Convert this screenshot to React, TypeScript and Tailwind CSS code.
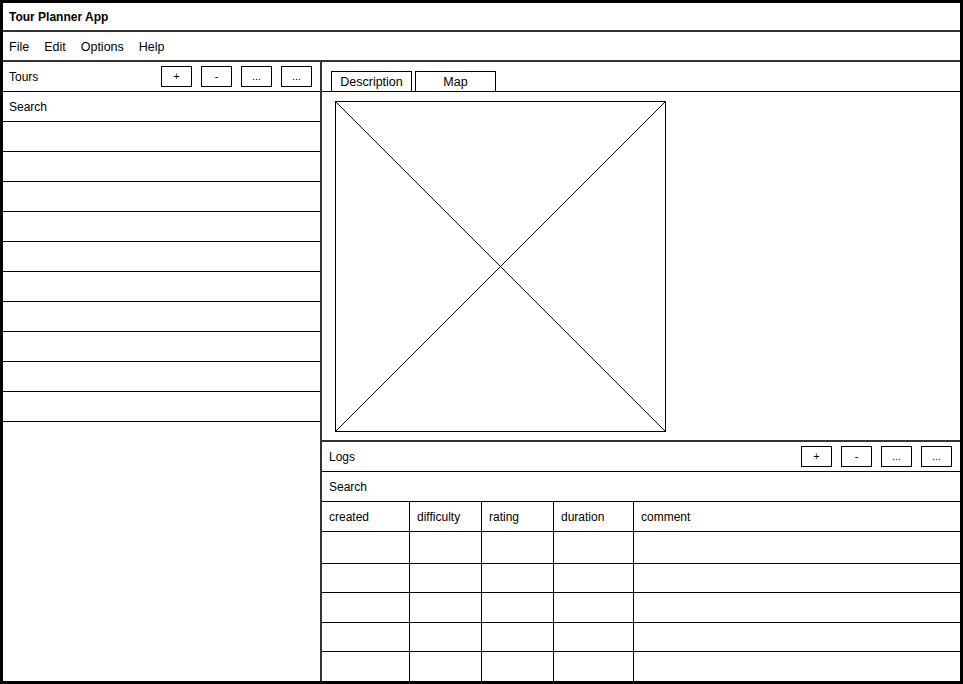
import React from "react";

const font = { fontFamily: '"Liberation Sans", Arial, sans-serif' };

const ToolButton: React.FC<{ label: string }> = ({ label }) => (
  <div className="flex items-center justify-center w-[31px] h-[21px] border border-black text-[11px] leading-none">
    {label}
  </div>
);

const Toolbar: React.FC = () => (
  <div className="flex gap-[9px]">
    <ToolButton label="+" />
    <ToolButton label="-" />
    <ToolButton label="..." />
    <ToolButton label="..." />
  </div>
);

const columns = [
  { name: "created", w: "w-[88px]" },
  { name: "difficulty", w: "w-[72px]" },
  { name: "rating", w: "w-[72px]" },
  { name: "duration", w: "w-[80px]" },
  { name: "comment", w: "flex-1" },
];

const rowHeights = ["h-[30px]", "h-[32px]", "h-[29px]", "h-[30px]", "h-[29px]", "flex-1"];

export default function App() {
  return (
    <div
      className="w-[963px] h-[684px] border-[3px] border-black bg-white text-black text-[12px] flex flex-col overflow-hidden"
      style={font}
    >
      <div className="h-[29px] shrink-0 border-b-2 border-[#333] flex items-center pl-[6px] font-bold">
        Tour Planner App
      </div>
      <div className="h-[30px] shrink-0 border-b-2 border-[#333] flex items-center pl-[6px] pt-[2px] gap-[15px] text-[12.5px]">
        <span>File</span>
        <span>Edit</span>
        <span>Options</span>
        <span>Help</span>
      </div>
      <div className="flex flex-1 min-h-0">
        {/* Tours panel */}
        <div className="w-[319px] shrink-0 border-r-2 border-[#333] flex flex-col">
          <div className="h-[30px] shrink-0 border-b border-black flex items-center justify-between pl-[6px] pr-[8px]">
            <span>Tours</span>
            <Toolbar />
          </div>
          <div className="h-[30px] shrink-0 border-b border-black flex items-center pl-[6px]">Search</div>
          {Array.from({ length: 10 }).map((_, i) => (
            <div key={i} className="h-[30px] shrink-0 border-b border-black" />
          ))}
        </div>

        {/* Right side */}
        <div className="flex-1 flex flex-col">
          <div className="h-[380px] shrink-0 border-b-2 border-[#333] flex flex-col">
            <div className="h-[30px] shrink-0 border-b border-black flex items-end pl-[9px] gap-[3px]">
              <div className="w-[81px] h-[20px] pt-[2px] border border-b-0 border-black flex items-center justify-center text-[12.5px]">
                Description
              </div>
              <div className="w-[81px] h-[20px] pt-[2px] border border-b-0 border-black flex items-center justify-center text-[12.5px]">
                Map
              </div>
            </div>
            <div className="pt-[9px] pl-[13px]">
              <div className="w-[331px] h-[331px] border border-black">
                <svg width="329" height="329" viewBox="0 0 329 329" className="block">
                  <line x1="0" y1="0" x2="329" y2="329" stroke="black" strokeWidth="1" />
                  <line x1="329" y1="0" x2="0" y2="329" stroke="black" strokeWidth="1" />
                </svg>
              </div>
            </div>
          </div>

          <div className="h-[30px] shrink-0 border-b border-black flex items-center justify-between pl-[7px] pr-[8px]">
            <span>Logs</span>
            <Toolbar />
          </div>
          <div className="h-[30px] shrink-0 border-b border-black flex items-center pl-[7px]">Search</div>
          <div className="flex-1 flex flex-col">
            {rowHeights.map((h, r) => (
              <div key={r} className={`${h} flex ${r < rowHeights.length - 1 ? "border-b border-black" : ""}`}>
                {columns.map((c, i) => (
                  <div
                    key={c.name}
                    className={`${c.w} flex items-center pl-[7px] ${i < columns.length - 1 ? "border-r border-black" : ""}`}
                  >
                    {r === 0 ? c.name : null}
                  </div>
                ))}
              </div>
            ))}
          </div>
        </div>
      </div>
    </div>
  );
}
